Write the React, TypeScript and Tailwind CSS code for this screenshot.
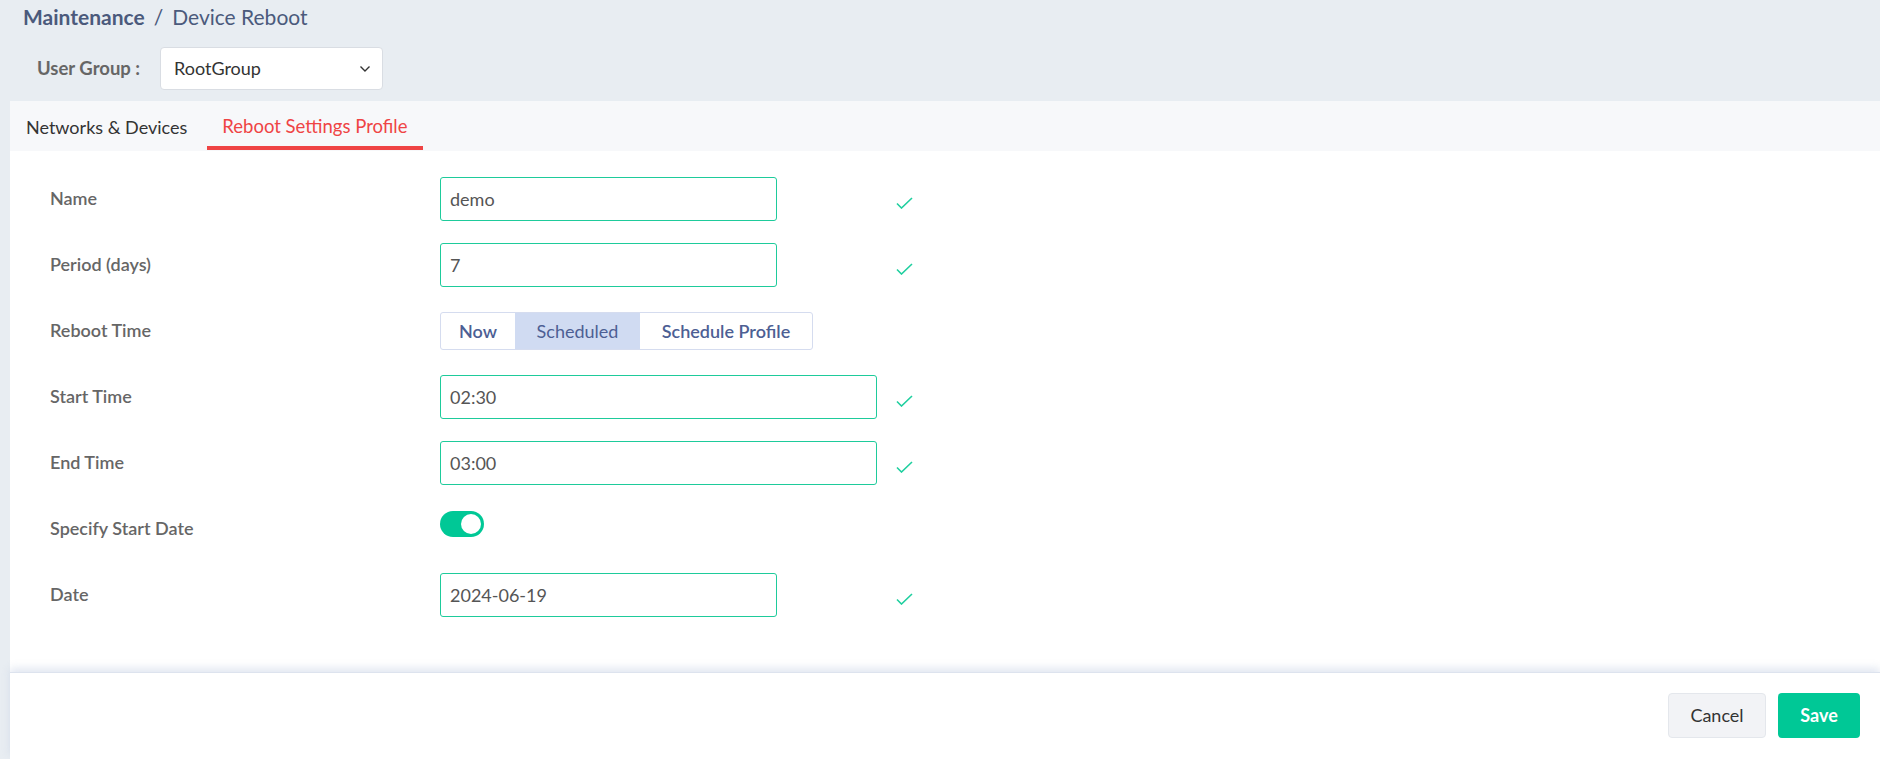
import React from "react";

function Check() {
  return (
    <svg width="17" height="12" viewBox="0 0 17 12" className="mt-[8px]">
      <path d="M1 6.5 L5.5 11 L16 1" fill="none" stroke="#1fcf9f" strokeWidth="1.6" />
    </svg>
  );
}

function Row({ label, children, check }: { label: string; children: React.ReactNode; check?: boolean }) {
  return (
    <div className="flex h-[66px] items-center">
      <div className="-mt-[2px] w-[390px] text-[18px] font-semibold text-[#666]">{label}</div>
      <div className="flex w-[456px] items-center">{children}</div>
      {check && <Check />}
    </div>
  );
}

function Field({ value, wide }: { value: string; wide?: boolean }) {
  return (
    <div
      className={`flex h-[44px] items-center rounded-[3px] border border-[#1ecb9b] bg-white pl-[9px] text-[18px] text-[#555] ${
        wide ? "w-[437px]" : "w-[337px]"
      }`}
    >
      {value}
    </div>
  );
}

export default function App() {
  return (
    <div className="min-h-screen bg-[#e8edf2] font-['Lato',sans-serif]">
      <div className="h-[101px] pl-[23px] pt-[3px]">
        <div className="flex h-[28px] items-center text-[21px] text-[#4b5a7c]">
          <span className="font-bold">Maintenance</span>
          <span className="mx-[9px]">/</span>
          <span>Device Reboot</span>
        </div>
        <div className="mt-[16px] flex items-center pl-[14px]">
          <div className="w-[123px] text-[18.5px] font-bold text-[#666]">User Group :</div>
          <div className="flex h-[43px] w-[223px] items-center justify-between rounded-[4px] border border-[#d9dde3] bg-white pl-[13px] pr-[11px] text-[18px] text-[#333]">
            <span>RootGroup</span>
            <svg width="12" height="8" viewBox="0 0 12 8">
              <path d="M1.5 1.5 L6 6 L10.5 1.5" fill="none" stroke="#333" strokeWidth="1.4" />
            </svg>
          </div>
        </div>
      </div>

      <div className="ml-[10px] flex h-[658px] flex-col bg-white">
        <div className="flex h-[50px] gap-[5px] bg-[#f7f8fa] pl-[1px]">
          <div className="flex h-[49px] items-center border-b-4 border-transparent px-[15px] pt-[7px] text-[18px] text-[#333]">
            Networks &amp; Devices
          </div>
          <div className="flex h-[49px] items-center border-b-4 border-[#ef4444] px-[15px] pt-[7px] text-[18.5px] text-[#ef4444]">
            Reboot Settings Profile
          </div>
        </div>

        <div className="flex-1 pl-[40px] pt-[15px]">
          <Row label="Name" check>
            <Field value="demo" />
          </Row>
          <Row label="Period (days)" check>
            <Field value="7" />
          </Row>
          <Row label="Reboot Time">
            <div className="flex h-[38px] overflow-hidden rounded-[3px] border border-[#d5dcef] text-[18px] text-[#4d5f94]">
              <div className="flex w-[74px] items-center justify-center font-semibold">Now</div>
              <div className="flex w-[125px] items-center justify-center bg-[#d0dbf2]">Scheduled</div>
              <div className="flex w-[172px] items-center justify-center font-semibold">Schedule Profile</div>
            </div>
          </Row>
          <Row label="Start Time" check>
            <Field value="02:30" wide />
          </Row>
          <Row label="End Time" check>
            <Field value="03:00" wide />
          </Row>
          <Row label="Specify Start Date">
            <div className="-mt-[10px] flex h-[26px] w-[44px] items-center justify-end rounded-full bg-[#00c896] pr-[3px]">
              <div className="h-[20px] w-[20px] rounded-full bg-white" />
            </div>
          </Row>
          <Row label="Date" check>
            <Field value="2024-06-19" />
          </Row>
        </div>

        <div className="flex h-[87px] justify-end gap-[12px] border-t border-[#dde3ee] pr-[20px] pt-[20px] shadow-[0_-4px_8px_rgba(190,202,225,0.45)]">
          <button className="h-[45px] w-[98px] rounded-[4px] border border-[#e4e7ec] bg-[#f2f3f6] text-[18px] text-[#333]">
            Cancel
          </button>
          <button className="h-[45px] w-[82px] rounded-[4px] bg-[#00c896] text-[18px] font-bold text-white">
            Save
          </button>
        </div>
      </div>
    </div>
  );
}
